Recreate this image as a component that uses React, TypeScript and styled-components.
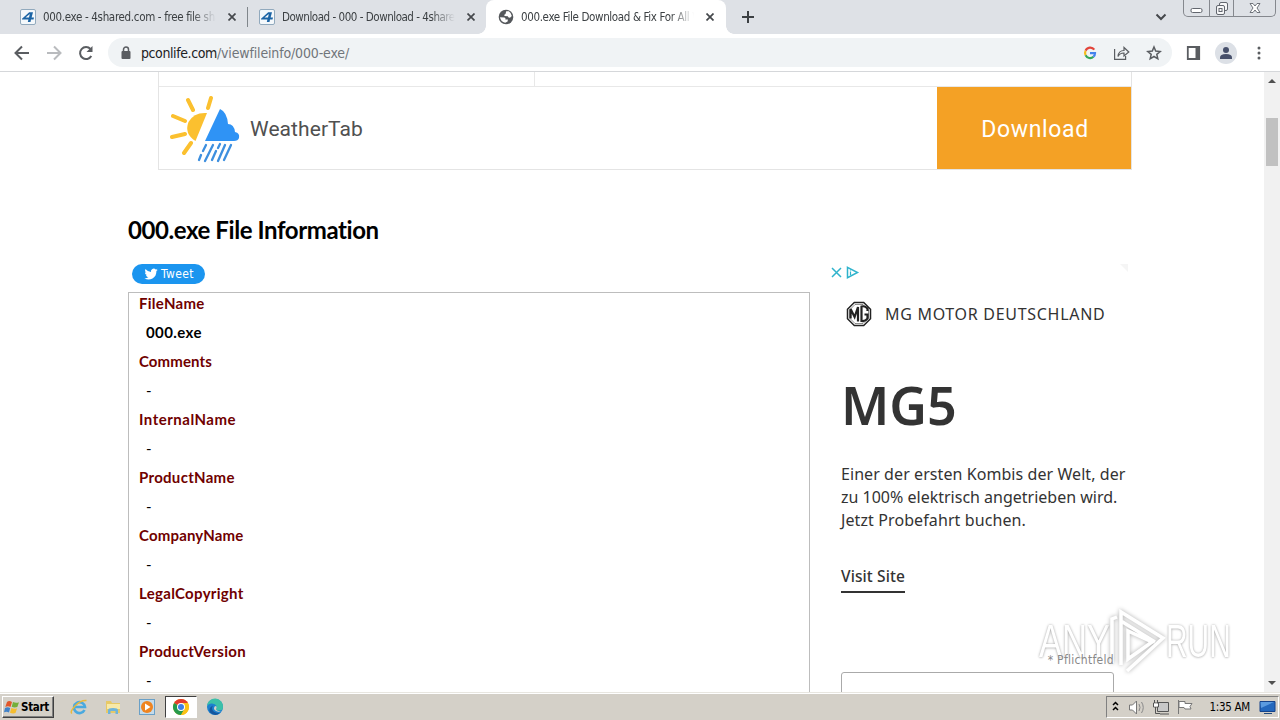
import React from 'react';
import styled, { createGlobalStyle } from 'styled-components';

const Global = createGlobalStyle`
  * { box-sizing: border-box; }
  html, body { margin: 0; padding: 0; overflow: hidden; background: #fff; }
`;

const ui = '"DejaVu Sans Condensed", "DejaVu Sans", sans-serif';
const sans = '"Noto Sans", sans-serif';
const humanist = 'Lato, "Noto Sans", sans-serif';

const Screen = styled.div`
  width: 1280px;
  height: 720px;
  display: flex;
  flex-direction: column;
  position: relative;
  overflow: hidden;
  white-space: nowrap;
  font-family: ${sans};
`;

/* Browser chrome */
const TabStrip = styled.div`
  height: 34px;
  flex: none;
  display: flex;
  background: #dee1e6;
  position: relative;
`;
const Tab = styled.div<{ $w: number; $active?: boolean; $pad: number }>`
  width: ${p => p.$w}px;
  height: 34px;
  padding-left: ${p => p.$pad}px;
  display: flex;
  align-items: center;
  position: relative;
  background: ${p => (p.$active ? '#fff' : 'transparent')};
  border-radius: ${p => (p.$active ? '8px 8px 0 0' : '0')};
  svg { flex: none; }
  &::before, &::after {
    content: '';
    display: ${p => (p.$active ? 'block' : 'none')};
    position: absolute;
    bottom: 0;
    width: 8px;
    height: 8px;
  }
  &::before { left: -8px; background: radial-gradient(circle at 0 0, transparent 7.5px, #fff 8px); }
  &::after { right: -8px; background: radial-gradient(circle at 100% 0, transparent 7.5px, #fff 8px); }
`;
const TabTitle = styled.div<{ $w: number; $ls: number }>`
  width: ${p => p.$w}px;
  overflow: hidden;
  margin-left: 7px;
  font: 11.5px/16px ${ui};
  letter-spacing: ${p => p.$ls}px;
  color: #3c4043;
  mask-image: linear-gradient(90deg, #000 calc(100% - 24px), transparent);
`;
const TabClose = styled.svg`
  margin-left: 12px;
`;
const Divider = styled.div`
  width: 1px;
  height: 20px;
  margin-top: 7px;
  background: #80868b;
`;
const NewTab = styled.svg`
  margin: 11px 0 0 16px;
`;
const StripEnd = styled.div`
  margin-left: auto;
  display: flex;
  svg { display: block; }
`;
const WindowButtons = styled.div`
  width: 93px;
  height: 17px;
  margin: 0 4px 0 16px;
  border: 1px solid #85888e;
  border-top: 0;
  border-radius: 0 0 5px 5px;
  display: flex;
`;
const WinButton = styled.div<{ $w: number }>`
  width: ${p => p.$w}px;
  height: 16px;
  display: flex;
  align-items: center;
  justify-content: center;
  & + & { border-left: 1px solid #85888e; }
`;

const Toolbar = styled.div`
  height: 38px;
  flex: none;
  display: flex;
  align-items: center;
  background: #fff;
  border-bottom: 1px solid #d5d7da;
`;
const NavIcons = styled.div`
  width: 108px;
  padding-left: 13px;
  display: flex;
  gap: 14px;
`;
const Omnibox = styled.div`
  width: 1064px;
  height: 29px;
  padding: 0 10px 0 12px;
  border-radius: 15px;
  background: #f0f3f5;
  display: flex;
  align-items: center;
`;
const Url = styled.div`
  margin-left: 9px;
  font: 14px/20px ${ui};
  letter-spacing: -0.15px;
  color: #70757a;
  b { font-weight: 400; letter-spacing: -0.4px; color: #202124; }
`;
const OmniIcons = styled.div`
  margin-left: auto;
  display: flex;
  align-items: center;
  gap: 16px;
`;
const ToolIcons = styled.div`
  margin-left: 14px;
  display: flex;
  align-items: center;
  gap: 14px;
`;

/* Page */
const Viewport = styled.div`
  height: 620px;
  flex: none;
  display: flex;
  overflow: hidden;
`;
const Page = styled.main`
  width: 1264px;
  height: 620px;
  overflow: hidden;
  background: #fff;
`;
const ScrollBar = styled.div`
  width: 16px;
  height: 620px;
  background: #f1f1f1;
  display: flex;
  flex-direction: column;
  align-items: center;
  svg { display: block; }
`;
const Thumb = styled.div`
  width: 12px;
  height: 48px;
  margin: 30px 0 auto;
  background: #c1c1c1;
`;
const Banner = styled.section`
  width: 974px;
  height: 98px;
  margin-left: 158px;
  border: 1px solid #e4e4e4;
  border-top: 0;
`;
const BannerTop = styled.div`
  height: 15px;
  border-bottom: 1px solid #e8e8e8;
  &::before {
    content: '';
    display: block;
    width: 375px;
    height: 14px;
    border-right: 1px solid #e8e8e8;
  }
`;
const BannerBody = styled.div`
  height: 82px;
  display: flex;
  align-items: center;
  padding-left: 11px;
  svg { margin-top: 2px; }
`;
const BannerName = styled.div`
  margin: 2px 0 0 8px;
  font: 21px/28px Roboto, sans-serif;
  letter-spacing: 0.08px;
  color: #505050;
`;
const BannerButton = styled.div`
  width: 194px;
  height: 82px;
  margin-left: auto;
  padding-left: 2px;
  background: #f4a125;
  color: #fff;
  font: 23px/85px Roboto, sans-serif;
  letter-spacing: 0.65px;
  text-align: center;
`;
const Title = styled.h1`
  margin: 44px 0 0 128px;
  font: 700 24px/32px ${humanist};
  font-variant-ligatures: none;
  letter-spacing: -0.42px;
  color: #000;
`;
const Columns = styled.div`
  margin: 18px 0 0 128px;
  display: flex;
`;
const InfoColumn = styled.div`
  width: 682px;
`;
const Tweet = styled.div`
  width: 73px;
  height: 20px;
  margin: 0 0 8px 4px;
  padding-left: 12px;
  border-radius: 10px;
  background: #1b95ef;
  color: #fff;
  display: flex;
  align-items: center;
  gap: 3px;
  font: 12px/20px ${ui};
  letter-spacing: 0.4px;
`;
const InfoBox = styled.dl`
  height: 430px;
  margin: 0;
  padding: 0 10px;
  border: 1px solid #bdbdbd;
`;
const Field = styled.dt`
  height: 29px;
  font: 700 15px/21px ${humanist};
  color: #700000;
`;
const FieldName = styled.span<{ $ls: number }>`
  letter-spacing: ${p => p.$ls}px;
`;
const Value = styled.dd<{ $strong?: boolean }>`
  height: 29px;
  margin: 0;
  padding-left: 7px;
  font: ${p => (p.$strong ? 700 : 400)} 15px/21px ${humanist};
  letter-spacing: ${p => (p.$strong ? 0.4 : 0)}px;
  color: #000;
`;
const Ad = styled.aside`
  width: 300px;
  margin-left: 20px;
  display: flex;
  flex-direction: column;
  align-items: flex-start;
  color: #333;
`;
const AdTop = styled.div`
  height: 17px;
  width: 298px;
  display: flex;
  justify-content: space-between;
`;
const AdBrand = styled.div`
  margin: 18px 0 0 15px;
  display: flex;
  align-items: center;
  gap: 13px;
  font: 400 16px/30px ${sans};
  letter-spacing: 0.7px;
`;
const AdTitle = styled.div`
  margin: 40px 0 0 11px;
  font: 600 52px/72px ${sans};
  letter-spacing: 0;
`;
const AdText = styled.div`
  margin: 22px 0 0 11px;
  font: 400 16px/23px ${sans};
`;
const AdLine = styled.div<{ $ls: number }>`
  letter-spacing: ${p => p.$ls}px;
`;
const Visit = styled.div`
  margin: 32px 0 0 11px;
  height: 29px;
  border-bottom: 2px solid #333;
  font: 500 15.5px/25px ${sans};
  letter-spacing: 0.1px;
`;
const Required = styled.div`
  width: 273px;
  margin: 59px 0 0 11px;
  position: relative;
  z-index: 2;
  text-align: right;
  font: 12px/16px ${ui};
  letter-spacing: 0.3px;
  color: #888;
`;
const Input = styled.div`
  width: 273px;
  height: 40px;
  margin: 4px 0 0 11px;
  border: 1px solid #aaa;
  border-radius: 3px;
`;

/* Watermark laid over the page */
const Watermark = styled.div`
  position: absolute;
  left: 1039px;
  top: 606px;
  display: flex;
  align-items: center;
  font: 400 46px/70px "Liberation Sans", sans-serif;
  color: #fff;
  text-shadow: 0 0 3px rgba(0, 0, 0, 0.32), 0 1px 3px rgba(0, 0, 0, 0.12);
  svg { margin: 0 0 0 -5px; filter: drop-shadow(0 0 2px rgba(0, 0, 0, 0.32)); }
`;
const WatermarkWord = styled.div<{ $w: number; $scale: number }>`
  width: ${p => p.$w}px;
  span { display: inline-block; transform: scaleX(${p => p.$scale}); transform-origin: 0 50%; }
`;

/* Taskbar */
const Taskbar = styled.footer`
  height: 28px;
  flex: none;
  display: flex;
  align-items: flex-start;
  background: #d4d0c8;
  border-top: 1px solid #e8e6e0;
  box-shadow: inset 0 1px 0 #fff;
  padding: 3px 1px 0 2px;
`;
const Start = styled.div`
  width: 52px;
  height: 22px;
  display: flex;
  align-items: center;
  border: 1px solid;
  border-color: #fff #404040 #404040 #fff;
  box-shadow: inset -1px -1px 0 #808080;
  font: 700 11.5px/20px ${ui};
  letter-spacing: -0.3px;
  color: #000;
  svg { margin: 0 1px 0 1px; }
`;
const Launch = styled.div`
  margin-left: 8px;
  display: flex;
`;
const Task = styled.div<{ $open?: boolean }>`
  width: ${p => (p.$open ? 32 : 34)}px;
  height: 22px;
  margin: ${p => (p.$open ? '0 1px' : '0')};
  display: flex;
  align-items: center;
  justify-content: center;
  background: ${p => (p.$open ? '#fff' : 'transparent')};
  border: ${p => (p.$open ? '1px solid' : '0')};
  border-color: #404040 #fff #fff #404040;
`;
const Tray = styled.div`
  width: 173px;
  height: 22px;
  margin-left: auto;
  display: flex;
  align-items: center;
  border: 1px solid;
  border-color: #808080 #fff #fff #808080;
  padding: 0 2px 0 5px;
`;
const Clock = styled.div`
  margin: 0 9px 0 auto;
  font: 11.5px/20px ${ui};
  letter-spacing: -0.3px;
  color: #000;
`;

const Four = () => (
  <svg width="16" height="16" viewBox="0 0 16 16">
    <rect x=".5" y=".5" width="15" height="15" rx="1.5" fill="#f4f8fb" stroke="#91a9bd" />
    <path d="M2 9.8L9.2 3.3H13L11.6 8.5H14L13.5 10.5H11L10.5 13H7.8L8.4 10.5H2zM5.5 8.5H9L9.8 5z" fill="#1c64a5" fillRule="evenodd" />
  </svg>
);
const CloseX = () => (
  <TabClose width="8" height="8" viewBox="0 0 8 8"><path d="M.5.5l7 7M7.5.5l-7 7" stroke="#45484c" strokeWidth="1.7" /></TabClose>
);
const Globe = () => (
  <svg width="16" height="16" viewBox="0 0 16 16">
    <circle cx="8" cy="8" r="7.3" fill="#55585c" />
    <path d="M8.2 2.3L10.8 2.2Q13.7 4.1 13.8 7.1L12 8.8Q10.2 8.7 9.8 7.2L6.5 6.9Q5.8 5.4 7.5 5zM2 8.3L6.4 8.5Q8 9.3 7.3 10.4H9.9L9.6 12.5 7.2 13.8Q2.7 12.9 2 8.3z" fill="#fff" />
  </svg>
);
const Weather = () => (
  <svg width="72" height="68" viewBox="0 0 72 68">
    <g stroke="#fbc02f" strokeWidth="4" strokeLinecap="round">
      <path d="M41 3L38 13M18 5l5 10M3 21l12 5M2 42l13-3M14 58l7-10" />
    </g>
    <path d="M37 18Q24 17 18.500 27Q14 39 25.500 46z" fill="#fbc02f" />
    <path d="M50 14Q57 17 58 29Q64 29 65 37Q70 38 69 43Q68 46 64 46H35z" fill="#2f93f5" />
    <g stroke="#3d8fdf" strokeWidth="2.300" strokeLinecap="round">
      <path d="M36 50l-3 6M31 60l-2 5M43 50l-8 16M50 49l-2 4M46 56l-4 9M55 50l-7 16M61 50l-7 15" />
    </g>
  </svg>
);
const Bird = () => (
  <svg width="14" height="14" viewBox="0 0 24 24"><path fill="#fff" d="M23.6 4.9c-.8.4-1.700.6-2.700.8a4.700 4.700 0 0 0 2-2.600c-.9.500-1.900.9-2.900 1.100a4.700 4.700 0 0 0-8 4.300A13.300 13.300 0 0 1 2.400 3.600a4.700 4.700 0 0 0 1.400 6.200c-.7 0-1.500-.2-2.100-.6v.1c0 2.200 1.600 4.100 3.700 4.600-.7.200-1.400.2-2.100.1.600 1.900 2.300 3.200 4.400 3.200a9.400 9.400 0 0 1-7 2A13.300 13.300 0 0 0 21.200 7.300c.9-.7 1.700-1.500 2.400-2.400z" /></svg>
);
const MgLogo = () => (
  <svg width="27" height="26" viewBox="-1 0 27 26" fill="none" stroke="#222">
    <path d="M8.300 1.500h9.400l6.800 6.800v9.400l-6.800 6.800H8.300l-6.800-6.800V8.300z" strokeWidth="1.500" />
    <path d="M9 3.500h8L22.500 9v8L17 22.500H9L3.500 17V9z" strokeWidth=".5" />
    <path d="M4.600 17.500V8l4 8L12 6v14.500" strokeWidth="2.200" />
    <path d="M21.500 10V7.500Q19 4.500 15.500 5.500V20q4 .5 6-2.500V13.500H18.500" strokeWidth="2.200" />
  </svg>
);
const Chrome = () => (
  <svg width="18" height="18" viewBox="0 0 18 18">
    <circle cx="9" cy="9" r="8" fill="#fbc116" />
    <path d="M9 9L2.070 5A8 8 0 0 1 15.930 5z" fill="#e33b2e" />
    <path d="M9 9L2.070 5A8 8 0 0 0 9 17l3.500-6z" fill="#269a4c" />
    <path d="M9 5h6.930A8 8 0 0 1 9 17l3.500-6z" fill="#fbc116" />
    <circle cx="9" cy="9" r="4" fill="#fff" /><circle cx="9" cy="9" r="3" fill="#3e7fe6" />
  </svg>
);

const fields: { name: string; ls: number; value: string }[] = [
  { name: 'FileName', ls: 0.27, value: '000.exe' },
  { name: 'Comments', ls: 0.1, value: '-' },
  { name: 'InternalName', ls: 0.5, value: '-' },
  { name: 'ProductName', ls: 0.3, value: '-' },
  { name: 'CompanyName', ls: 0.17, value: '-' },
  { name: 'LegalCopyright', ls: 0.3, value: '-' },
  { name: 'ProductVersion', ls: 0.3, value: '-' },
];

export default function App() {
  return (
    <Screen>
      <Global />
      <TabStrip>
        <Tab $w={247} $pad={20}><Four /><TabTitle $w={173} $ls={-0.33}>000.exe - 4shared.com - free file sharing</TabTitle><CloseX /></Tab>
        <Divider />
        <Tab $w={238} $pad={11}><Four /><TabTitle $w={173} $ls={-0.47}>Download - 000 - Download - 4shared</TabTitle><CloseX /></Tab>
        <Tab $w={240} $pad={12} $active><Globe /><TabTitle $w={173} $ls={-0.36}>000.exe File Download &amp; Fix For All Windows</TabTitle><CloseX /></Tab>
        <NewTab width="12" height="12" viewBox="0 0 12 12"><path d="M6 0v12M0 6h12" stroke="#3c4043" strokeWidth="2" /></NewTab>
        <StripEnd>
          <svg width="12" height="34" viewBox="0 0 12 34"><path d="M1.500 14.500L6 19l4.500-4.500" fill="none" stroke="#45484c" strokeWidth="2" /></svg>
          <WindowButtons>
            <WinButton $w={25}><svg width="13" height="16" viewBox="0 0 13 16"><rect x="1" y="8.500" width="11" height="4" rx="1.500" fill="#fff" stroke="#62666e" /></svg></WinButton>
            <WinButton $w={25}><svg width="14" height="16" viewBox="0 0 14 16" fill="#f7f7f8" stroke="#62666e"><rect x="4.500" y="2.500" width="8" height="8" rx="1.500" /><rect x="1.500" y="5.500" width="8" height="9" rx="1.500" /><rect x="4" y="8.500" width="3" height="3" /></svg></WinButton>
            <WinButton $w={42}><svg width="12" height="16" viewBox="0 0 12 16"><path d="M1 3.500h3l2 2.500 2-2.500h3L8 8l3 4.500H8L6 10l-2 2.500H1L4 8z" fill="#fff" stroke="#62666e" strokeWidth=".9" /></svg></WinButton>
          </WindowButtons>
        </StripEnd>
      </TabStrip>
      <Toolbar>
        <NavIcons>
          <svg width="18" height="18" viewBox="0 0 18 18" fill="none" stroke="#5a5d61" strokeWidth="2"><path d="M16 9H3M9 2.500L2.500 9 9 15.500" /></svg>
          <svg width="18" height="18" viewBox="0 0 18 18" fill="none" stroke="#b9bbbe" strokeWidth="2"><path d="M2 9h13M9 2.500L15.500 9 9 15.500" /></svg>
          <svg width="18" height="18" viewBox="0 0 18 18"><path d="M14.300 12A6 6 0 1 1 13.500 5" fill="none" stroke="#5a5d61" strokeWidth="2" /><path d="M15.500 2v6h-6z" fill="#5a5d61" /></svg>
        </NavIcons>
        <Omnibox>
          <svg width="12" height="14" viewBox="0 0 12 14"><rect x="1.500" y="5" width="9" height="8" rx="1" fill="#5a5d61" /><path d="M3.500 6V3.500a2.500 2.500 0 0 1 5 0V6" fill="none" stroke="#5a5d61" strokeWidth="1.500" /></svg>
          <Url><b>pconlife.com</b>/viewfileinfo/000-exe/</Url>
          <OmniIcons>
            <svg width="14" height="16" viewBox="0 0 14 16" fill="none" strokeWidth="2.200">
              <path d="M11.300 4.600A5 5 0 0 0 2.600 5.700" stroke="#e2443a" /><path d="M2.600 5.700a5 5 0 0 0 0 4.600" stroke="#f5bb1c" /><path d="M2.600 10.300a5 5 0 0 0 7.800 1.500" stroke="#35a558" /><path d="M10.400 11.800A5 5 0 0 0 12 8.200H7" stroke="#4482ed" />
            </svg>
            <svg width="17" height="16" viewBox="0 0 17 16" fill="none" stroke="#5a5d61" strokeWidth="1.200"><path d="M1.600 4v10.400h11V11M5 11.500q.5-6 6-6V2.500L15.800 7 11 11V8q-4-.2-6 3.500z" /></svg>
            <svg width="16" height="16" viewBox="0 0 16 16" fill="none" stroke="#5a5d61" strokeWidth="1.500"><path d="M8 2l1.700 4.100 4.500.4-3.400 2.900 1 4.400L8 11.500l-3.800 2.300 1-4.400L1.800 6.500l4.500-.4z" /></svg>
          </OmniIcons>
        </Omnibox>
        <ToolIcons>
          <svg width="15" height="14" viewBox="0 0 15 14"><path d="M1.800 1h11.400v12H1.800z" fill="none" stroke="#5a5d61" strokeWidth="1.800" /><path d="M9.500 1H14v12H9.500z" fill="#5a5d61" /></svg>
          <svg width="22" height="22" viewBox="0 0 22 22"><circle cx="11" cy="11" r="11" fill="#dce0e6" /><circle cx="11" cy="8" r="3" fill="#47506b" /><path d="M5 17v-1.500q0-3.500 6-3.500t6 3.500V17z" fill="#47506b" /></svg>
          <svg width="16" height="16" viewBox="0 0 16 16" fill="#5a5d61"><circle cx="8" cy="3" r="1.500" /><circle cx="8" cy="8" r="1.500" /><circle cx="8" cy="13" r="1.500" /></svg>
        </ToolIcons>
      </Toolbar>

      <Viewport>
        <Page>
          <Banner>
            <BannerTop />
            <BannerBody>
              <Weather />
              <BannerName>WeatherTab</BannerName>
              <BannerButton>Download</BannerButton>
            </BannerBody>
          </Banner>
          <Title>000.exe File Information</Title>
          <Columns>
            <InfoColumn>
              <Tweet><Bird />Tweet</Tweet>
              <InfoBox>
                {fields.map((f, i) => (
                  <React.Fragment key={f.name}>
                    <Field><FieldName $ls={f.ls}>{f.name}</FieldName></Field>
                    <Value $strong={i === 0}>{f.value}</Value>
                  </React.Fragment>
                ))}
              </InfoBox>
            </InfoColumn>
            <Ad>
              <AdTop>
                <svg width="30" height="17" viewBox="0 0 30 17" fill="none" stroke="#2fb3cc" strokeWidth="1.500"><path d="M2 4l9 9M11 4l-9 9M17.500 3.300L27.500 8.500l-10 5.200z" /><path d="M20.500 7.500v3.500M20.500 5.500v1" strokeWidth="1.200" /></svg>
                <svg width="8" height="8" viewBox="0 0 8 8"><path d="M0 0h8v8z" fill="#f5f5f5" /></svg>
              </AdTop>
              <AdBrand><MgLogo />MG MOTOR DEUTSCHLAND</AdBrand>
              <AdTitle>MG5</AdTitle>
              <AdText>
                <AdLine $ls={0.07}>Einer der ersten Kombis der Welt, der</AdLine>
                <AdLine $ls={0}>zu 100% elektrisch angetrieben wird.</AdLine>
                <AdLine $ls={0.1}>Jetzt Probefahrt buchen.</AdLine>
              </AdText>
              <Visit>Visit Site</Visit>
              <Required>* Pflichtfeld</Required>
              <Input />
            </Ad>
          </Columns>
        </Page>
        <ScrollBar>
          <svg width="16" height="16" viewBox="0 0 16 16"><path d="M4 11l4-4 4 4z" fill="#505050" /></svg>
          <Thumb />
          <svg width="16" height="16" viewBox="0 0 16 16"><path d="M4 5l4 4 4-4z" fill="#505050" /></svg>
        </ScrollBar>
      </Viewport>

      <Watermark>
        <WatermarkWord $w={72} $scale={0.75}><span>ANY</span></WatermarkWord>
        <svg width="60" height="68" viewBox="0 0 60 68" fill="none" stroke="#fff" strokeWidth="3.500"><path d="M6 56V12l5-2M15 58V5l42 26-36 33M15 14l34 21M22 24v28l24-17z" /></svg>
        <WatermarkWord $w={66} $scale={0.65}><span>RUN</span></WatermarkWord>
      </Watermark>

      <Taskbar>
        <Start>
          <svg width="16" height="16" viewBox="0 0 16 16"><path d="M3 3q2-2 5 0L6.500 8Q4 6.500 1.300 8z" fill="#e2572b" /><path d="M9 3q3 1.500 6 .3L13.300 8Q10.500 9 7.700 7.800z" fill="#74af3b" /><path d="M1 9q2.500-1.500 5.200 0L5 13.500Q2.500 12 0 13.300z" fill="#4182c9" /><path d="M7.400 9q3 1.300 5.700.2L11.500 14Q9 15 6 13.700z" fill="#f5bd30" /></svg>
          Start
        </Start>
        <Launch>
          <Task>
            <svg width="18" height="18" viewBox="0 0 18 18" fill="none"><path d="M14.500 12A5.500 5.500 0 1 1 15 9H5" stroke="#4aa9df" strokeWidth="2.600" /><path d="M2 15.500Q-.5 14 5 8T16.500 2.500" stroke="#e9b93a" strokeWidth="1.400" /></svg>
          </Task>
          <Task>
            <svg width="18" height="18" viewBox="0 0 18 18"><path d="M2 3h5l1 2h8v10H2z" fill="#e7c967" /><path d="M3 6h13v5H3z" fill="#f8e9a8" /><path d="M4 16v-4q0-2 5-2t5 2v4h-2.500v-3h-5v3z" fill="#6fb4da" /></svg>
          </Task>
          <Task>
            <svg width="18" height="18" viewBox="0 0 18 18"><rect x="1.500" y="1.500" width="15" height="15" fill="#c5dbea" stroke="#6aa0c7" /><circle cx="9" cy="9" r="6" fill="#ef8420" /><path d="M7 5.500L12.500 9 7 12.500z" fill="#fff" /></svg>
          </Task>
          <Task $open><Chrome /></Task>
          <Task>
            <svg width="18" height="18" viewBox="0 0 18 18"><circle cx="9" cy="9" r="8" fill="#1c81cf" /><path d="M1 8a8 8 0 0 1 16 1q0 3.500-4 3.500-3 0-3-1.500 1-1 .5-3Q9 5 5 5.500 2 6 1 8z" fill="#3cc0a8" /><path d="M6 10q0 5 8 5-5 4-10-.5Q2 10 7 7.500 6 9 6 10z" fill="#15569e" /><path d="M10 11q1-1 .5-2.500L9 8q-2.500 3 1 5 3 1.500 6-.5-2 1-4.500.2Q10 12 10 11z" fill="#d4d0c8" /></svg>
          </Task>
        </Launch>
        <Tray>
          <svg width="82" height="18" viewBox="0 0 82 18" fill="none">
            <path d="M1 7l2.500-2.500L6 7M1 12l2.500-2.500L6 12" stroke="#000" strokeWidth="1.500" />
            <path d="M17.500 7h3l4-4v13l-4-4h-3z" fill="#fff" stroke="#777" /><path d="M27 6q2 3.500 0 7M29.500 4q3.500 5.500 0 11" stroke="#888" />
            <path d="M45.500 4.500h11v9h-11z" fill="#c8c8c8" stroke="#555" /><path d="M48 16h9M42.500 2v3M45.500 2v3M41.500 5h5v4h-5zM43.500 9v6.500H48" stroke="#555" /><path d="M42 5.500h4v3h-4z" fill="#fff" />
            <path d="M66.500 2v14" stroke="#777" /><path d="M67 3.500h6v2h7l-2 3 1 2.500h-6l-1-1.500h-5z" fill="#fff" stroke="#777" />
          </svg>
          <Clock>1:35 AM</Clock>
          <svg width="17" height="16" viewBox="0 0 17 16"><path d="M1 2.500h15v10H1z" fill="#2468bd" stroke="#16438a" /><path d="M1.500 3H15L2 9z" fill="#5b9be0" /><path d="M5 14.500h8" stroke="#244b7c" /></svg>
        </Tray>
      </Taskbar>
    </Screen>
  );
}
